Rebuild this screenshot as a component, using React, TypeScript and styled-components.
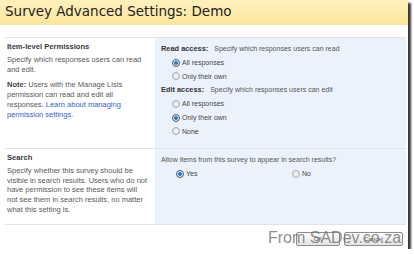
import React from 'react'
import styled, { createGlobalStyle } from 'styled-components'

const GlobalStyle = createGlobalStyle`
  html, body { margin: 0; padding: 0; background: #ffffff; }
  body { font-family: "Liberation Sans", Arial, sans-serif; }
`;

const Frame = styled.div`
  position: relative;
  width: 408px;
  height: 249px;
  background: #ffffff;
  box-shadow: 3px 3px 2px rgba(20, 20, 20, 0.85);
  overflow: hidden;
`;

const TitleBar = styled.div`
  height: 25px;
  padding-left: 5px;
  background: linear-gradient(#fff1bd, #fde49c);
  font-family: "DejaVu Sans", Verdana, sans-serif;
  font-size: 13.5px;
  line-height: 22px;
  color: #222222;
`;

const Content = styled.div`
  margin: 12px 2px 0 5px;
  border-top: 1px solid #e3e3e3;
`;

const Section = styled.div<{ $height: number }>`
  display: grid;
  grid-template-columns: 150px 1fr;
  height: ${p => p.$height}px;
  border-bottom: 1px solid #e3e3e3;
`;

const Describe = styled.div`
  padding: 4px 0 0 2px;
  font-size: 7.5px;
  line-height: 9.8px;
  color: #5a5a5a;
  white-space: nowrap;
`;

const Heading = styled.div`
  font-weight: bold;
  font-size: 7.6px;
  color: #3a3a3a;
  margin-bottom: 3px;
`;

const Para = styled.p`
  margin: 0 0 6px 0;
  b { color: #444444; }
`;

const Link = styled.a`
  color: #3562c4;
  text-decoration: none;
`;

const Options = styled.div`
  background: #ebf2fd;
  padding: 4px 6px 0 6px;
  font-size: 7px;
  color: #555555;
`;

const AccessLine = styled.div`
  height: 14px;
  line-height: 14px;
  b { color: #333333; font-size: 7.4px; margin-right: 6px; }
`;

const RadioRow = styled.div<{ $indent?: number }>`
  display: flex;
  align-items: center;
  gap: 2px;
  height: 13.6px;
  padding-left: ${p => p.$indent ?? 11}px;
  color: #444444;
`;

const RadioPair = styled.div`
  display: grid;
  grid-template-columns: 116px 1fr;
  padding-left: 15px;
`;

const Radio = styled.span<{ $on?: boolean }>`
  width: 8px;
  height: 8px;
  border-radius: 50%;
  box-sizing: border-box;
  border: 1px solid ${p => (p.$on ? '#4a5a6e' : '#a9aeb6')};
  background: ${p =>
    p.$on
      ? 'radial-gradient(circle, #2f7fd0 0 1.6px, #e4e8ee 2.2px)'
      : 'radial-gradient(circle, #f6f7f9, #d8dce2)'};
`;

const Footer = styled.div`
  display: flex;
  justify-content: flex-end;
  gap: 4px;
  padding: 7px 3px 0 0;
`;

const Button = styled.button<{ $w: number }>`
  width: ${p => p.$w}px;
  height: 14px;
  padding: 0;
  border: 1px solid #8d8d8d;
  border-radius: 2px;
  background: linear-gradient(#fbfbfb, #e4e4e4);
  font-family: "Liberation Sans", Arial, sans-serif;
  font-size: 6px;
  color: #555555;
`;

const Watermark = styled.div`
  position: absolute;
  left: 268px;
  top: 229px;
  white-space: nowrap;
  font-family: "Liberation Sans", Arial, sans-serif;
  font-size: 16px;
  color: rgba(120, 120, 120, 0.85);
  pointer-events: none;
`;

const Option = ({ label, on, indent }: { label: string; on?: boolean; indent?: number }) => (
  <RadioRow $indent={indent}>
    <Radio $on={on} />
    <span>{label}</span>
  </RadioRow>
);

const App = () => {
  return (
    <>
      <GlobalStyle />
      <Frame>
        <TitleBar>Survey Advanced Settings: Demo</TitleBar>
        <Content>
          <Section $height={110}>
            <Describe>
              <Heading>Item-level Permissions</Heading>
              <Para>
                Specify which responses users can read
                <br />
                and edit.
              </Para>
              <Para>
                <b>Note:</b> Users with the Manage Lists
                <br />
                permission can read and edit all
                <br />
                responses. <Link href="#">Learn about managing</Link>
                <br />
                <Link href="#">permission settings.</Link>
              </Para>
            </Describe>
            <Options>
              <AccessLine>
                <b>Read access:</b>Specify which responses users can read
              </AccessLine>
              <Option label="All responses" on />
              <Option label="Only their own" />
              <AccessLine>
                <b>Edit access:</b>Specify which responses users can edit
              </AccessLine>
              <Option label="All responses" />
              <Option label="Only their own" on />
              <Option label="None" />
            </Options>
          </Section>
          <Section $height={75}>
            <Describe>
              <Heading>Search</Heading>
              <Para>
                Specify whether this survey should be
                <br />
                visible in search results. Users who do not
                <br />
                have permission to see these items will
                <br />
                not see them in search results, no matter
                <br />
                what this setting is.
              </Para>
            </Describe>
            <Options>
              <AccessLine>Allow items from this survey to appear in search results?</AccessLine>
              <RadioPair>
                <Option label="Yes" on indent={0} />
                <Option label="No" indent={0} />
              </RadioPair>
            </Options>
          </Section>
          <Footer>
            <Button $w={44}>OK</Button>
            <Button $w={59}>Cancel</Button>
          </Footer>
        </Content>
        <Watermark>From SADev.co.za</Watermark>
      </Frame>
    </>
  )
}

export default App
